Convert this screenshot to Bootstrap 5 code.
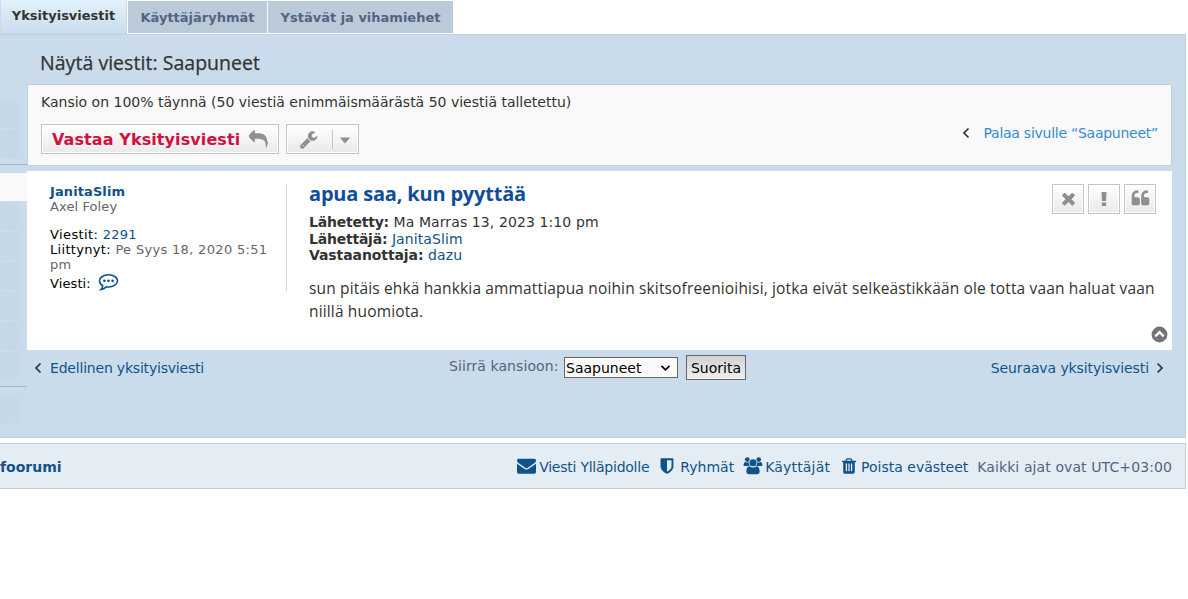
<!DOCTYPE html>
<html lang="fi">
<head>
<meta charset="utf-8">
<meta name="viewport" content="width=device-width, initial-scale=1">
<title>Näytä viestit: Saapuneet</title>
<link href="https://cdn.jsdelivr.net/npm/bootstrap@5.3.0/dist/css/bootstrap.min.css" rel="stylesheet">
<style>
body{font-family:"DejaVu Sans",Verdana,sans-serif;font-size:14px;line-height:16px;color:#333;background:#fff;overflow:hidden}
a{color:#105289;text-decoration:none}
svg{display:block;fill:currentColor;flex:none}
.page-wrap{width:1186px}
.tabs-bar{height:34px}
.tabs-bar .nav-link{padding:0;font-weight:700;font-size:13px;color:#536482;background:#bacad8;border-radius:0;height:32px;margin-top:1px;line-height:33px;text-align:center}
.tabs-bar .nav-link.active{background:linear-gradient(#e1f1fe,#cadceb);color:#333;height:34px;margin:0;width:127px;line-height:31px;border-left:1px solid #cadceb;border-right:1px solid #cadceb}
.cp-panel{height:404px;background:#cadceb;border:1px solid #bcd2e2;border-left:0}
.side-menu{width:27px;flex:none;padding-top:65px}
.side-item{height:28px;margin-bottom:2px;background:linear-gradient(90deg,#c6d8e6 45%,#cadceb 90%)}
.side-item.current{background:#f9f9f9;margin-bottom:1px}
.side-rule{height:1px;margin:6px 0 8px;background:#a4b3c1}
.cp-main{width:1145px}
h2{font-family:"Open Sans",sans-serif;font-size:19.5px;line-height:24px;font-weight:400;letter-spacing:.04px;margin:16px 0 9px 13px;-webkit-text-stroke:.25px #333}
.msg-bar{height:82px;background:#f9f9f9;border:1px solid #bcd2e2;padding:9px 13px 0}
.tool-btn{border:1px solid #c7c3bf;background:linear-gradient(#fff,#e9e9e9);box-shadow:inset 0 0 0 1px #fff;height:30px;color:#8f8f8f;border-radius:0;padding:0}
.reply-btn{width:238px;color:#d31141;font-weight:700;font-size:16px;letter-spacing:.09px;padding-left:10px;white-space:nowrap}
.reply-btn span{padding-top:2px}
.split-line{width:1px;height:19px;background:#c7c3bf}
.back-link{color:#368ad2;letter-spacing:-.26px;margin-top:-12px}
.post-box{height:179px;background:#fff;margin-top:5px;padding:13px 16px 0 23px}
.author{width:237px;height:107px;border-right:1px solid #d8d8d8;font-size:13px;line-height:15px;color:#666}
.author b{color:#000;font-weight:400}
h3{font-family:"Open Sans",sans-serif;font-size:20px;font-weight:700;letter-spacing:-.19px;line-height:24px;margin:-2px 0 8px;color:#0f4d9a}
.meta-rows{line-height:16.5px;letter-spacing:.1px}
.meta-rows b{letter-spacing:-.22px}
.post-text{font-family:"Open Sans",sans-serif;font-size:15.500px;letter-spacing:.15px;line-height:23px}
.go-select{width:114px;height:21px;border:1px solid #666;background:#fafafa;color:#000;padding:0 6px 0 1px}
.go-btn{width:60px;height:25px;border:1px solid #666;background:linear-gradient(#d2d2d2,#efefef);color:#000;padding:0}
.foot-bar{height:46px;margin-top:5px;background:#e5edf4;border:1px solid #bcd2e2;border-left:0;padding:2px 13px 0 0}
.grey{color:#536482}
</style>
</head>
<body>
<div class="page-wrap">
  <nav class="nav tabs-bar flex-nowrap">
    <a class="nav-link active" href="#">Yksityisviestit</a>
    <a class="nav-link" href="#" style="width:139px;margin-left:1px">Käyttäjäryhmät</a>
    <a class="nav-link" href="#" style="width:185px;margin-left:1px">Ystävät ja vihamiehet</a>
  </nav>
  <main class="cp-panel d-flex">
    <div class="side-menu">
      <div class="side-item"></div><div class="side-item"></div>
      <div class="side-rule"></div>
      <div class="side-item current"></div>
      <div class="side-item"></div><div class="side-item"></div><div class="side-item"></div><div class="side-item"></div><div class="side-item"></div><div class="side-item"></div>
      <div class="side-rule"></div>
      <div class="side-item"></div>
    </div>
    <div class="cp-main">
      <h2>Näytä viestit: Saapuneet</h2>
      <div class="msg-bar">
        <div>Kansio on 100% täynnä (50 viestiä enimmäismäärästä 50 viestiä talletettu)</div>
        <div class="d-flex align-items-center" style="margin-top:14px">
          <a class="btn tool-btn reply-btn d-flex align-items-center" href="#"><span>Vastaa Yksityisviesti</span>
            <svg class="ms-auto" style="color:#8f8f8f;margin-right:10px" width="19" height="19" viewBox="0 0 1792 1792"><path d="M1792 1120q0 166-127 451-3 7-10.500 24t-13.500 30-13 22q-12 17-28 17-15 0-23.500-10t-8.500-25q0-9 2.500-26.500t2.500-23.500q5-68 5-123 0-112-19.500-200.500t-54-153.500-89-112-117-78.500-148.500-50-173-25.500-198-7h-224v256q0 26-19 45t-45 19-45-19l-512-512q-19-19-19-45t19-45l512-512q19-19 45-19t45 19 19 45v256h224q713 0 875 403 53 134 53 333z"/></svg></a>
          <button class="btn tool-btn d-flex align-items-center" style="width:73px;margin-left:7px;padding-left:12px">
            <svg width="19" height="19" viewBox="0 0 1792 1792"><path d="M448 1472q0-26-19-45t-45-19-45 19-19 45 19 45 45 19 45-19 19-45zm644-420l-682 682q-37 37-90 37-52 0-91-37l-106-108q-38-36-38-90 0-53 38-91l681-681q39 98 114.500 173.500t173.500 114.500zm634-435q0 39-23 106-47 134-164.500 217.500t-258.500 83.500q-185 0-316.500-131.500t-131.500-316.500 131.500-316.500 316.500-131.500q58 0 121.500 16.500t107.500 46.500q16 11 16 28t-16 28l-293 169v224l193 107q5-3 79-48.500t135.500-81 70.500-35.500q15 0 23.500 10t8.500 25z"/></svg>
            <i class="split-line" style="margin:0 6px 0 14px"></i>
            <svg width="12" height="7" viewBox="0 0 12 7" style="margin-top:2px"><path d="M.8.5h10.400L6 6.500z"/></svg>
          </button>
          <a class="back-link ms-auto d-flex align-items-center" href="#"><svg width="8" height="12" viewBox="0 0 8 12" style="margin-right:14px"><path d="M6.500 1.500L2 6l4.500 4.500" fill="none" stroke="#333" stroke-width="1.700"/></svg>Palaa sivulle “Saapuneet”</a>
        </div>
      </div>
      <article class="post-box d-flex">
        <div class="author">
          <div><a href="#" class="fw-bold" style="letter-spacing:.1px">JanitaSlim</a></div>
          <div style="margin-bottom:13px;letter-spacing:.1px">Axel Foley</div>
          <div style="letter-spacing:.2px"><b style="letter-spacing:.4px">Viestit:</b> <a href="#">2291</a></div>
          <div class="text-nowrap" style="letter-spacing:.32px"><b>Liittynyt:</b> Pe Syys 18, 2020 5:51<br>pm</div>
          <div class="d-flex align-items-center" style="height:21px"><b style="margin-top:2px;letter-spacing:.1px">Viesti:</b><svg style="color:#105289;margin:-1px 0 0 7px" width="21" height="18" viewBox="0 0 21 18"><path d="M10.500 1.700c5 0 9 2.700 9 6.100s-4 6.200-9 6.200q-1.200 0-2.300-.2Q5.800 16 3 16.500q1.500-1.500 1.700-3.800Q1.500 10.800 1.500 7.800c0-3.400 4-6.100 9-6.100z" fill="none" stroke="currentColor" stroke-width="1.600"/><circle cx="6.400" cy="7.800" r="1.350"/><circle cx="10.500" cy="7.800" r="1.350"/><circle cx="14.600" cy="7.800" r="1.350"/></svg></div>
        </div>
        <div class="flex-grow-1 position-relative" style="margin-left:22px">
          <h3>apua saa, kun pyyttää</h3>
          <div class="meta-rows">
            <div><b>Lähetetty:</b> Ma Marras 13, 2023 1:10 pm</div>
            <div><b>Lähettäjä:</b> <a href="#">JanitaSlim</a></div>
            <div><b style="letter-spacing:-.09px">Vastaanottaja:</b> <a href="#">dazu</a></div>
          </div>
          <div class="post-text text-nowrap" style="margin-top:13px">sun pitäis ehkä hankkia ammattiapua noihin skitsofreenioihisi, jotka eivät selkeästikkään ole totta vaan haluat vaan<br>niillä huomiota.</div>
          <div class="d-flex position-absolute top-0 end-0" style="gap:4px">
            <button class="btn tool-btn d-flex align-items-center justify-content-center" style="width:32px"><svg width="19" height="19" viewBox="0 0 1792 1792" style="margin-top:-2px"><path d="M1490 1322q0 40-28 68l-136 136q-28 28-68 28t-68-28l-294-294-294 294q-28 28-68 28t-68-28l-136-136q-28-28-28-68t28-68l294-294-294-294q-28-28-28-68t28-68l136-136q28-28 68-28t68 28l294 294 294-294q28-28 68-28t68 28l136 136q28 28 28 68t-28 68l-294 294 294 294q28 28 28 68z"/></svg></button>
            <button class="btn tool-btn d-flex align-items-center justify-content-center" style="width:32px"><svg width="6" height="16" viewBox="0 0 6 16" style="margin-top:-1px"><path d="M.4 1h5.200L5 10H1zM.8 11.500h4.400v3.500H.8z"/></svg></button>
            <button class="btn tool-btn d-flex align-items-center justify-content-center" style="width:32px"><svg width="19" height="19" viewBox="0 0 1792 1792" style="margin-top:-1px"><path id="q" d="M832 960v384q0 80-56 136t-136 56h-384q-80 0-136-56t-56-136v-704q0-104 40.500-198.500t109.500-163.500 163.500-109.500 198.500-40.500h64q26 0 45 19t19 45v128q0 26-19 45t-45 19h-64q-106 0-181 75t-75 181v32q0 40 28 68t68 28h224q80 0 136 56t56 136z"/><use href="#q" x="896"/></svg></button>
          </div>
          <svg class="position-absolute" style="right:-12px;bottom:7px;color:#757575" width="17" height="17" viewBox="0 0 17 17"><circle cx="8.500" cy="8.500" r="7.900"/><path d="M4.300 10.300l4.200-4.100 4.200 4.100" fill="none" stroke="#fff" stroke-width="2.400"/></svg>
        </div>
      </article>
      <div class="d-flex position-relative" style="padding:5px 8px 0 7px">
        <a class="d-flex align-items-center" style="height:26px;letter-spacing:-.2px" href="#"><svg width="8" height="12" viewBox="0 0 8 12" style="margin-right:8px"><path d="M6.500 1.500L2 6l4.500 4.500" fill="none" stroke="#333" stroke-width="1.700"/></svg>Edellinen yksityisviesti</a>
        <div class="d-flex align-items-center position-absolute" style="left:422px;top:4px;height:26px"><span class="grey" style="margin-top:-3px;width:115px;letter-spacing:.08px">Siirrä kansioon:</span>
          <button class="go-select d-flex align-items-center justify-content-between"><span style="margin-top:1px">Saapuneet</span><svg width="11" height="8" viewBox="0 0 11 8" style="margin-top:2px"><path d="M1.500 1.800l4 4 4-4" fill="none" stroke="#000" stroke-width="1.700"/></svg></button>
          <button class="go-btn" style="margin-left:8px;padding-top:2px">Suorita</button></div>
        <a class="d-flex align-items-center ms-auto" style="height:26px;letter-spacing:-.1px" href="#">Seuraava yksityisviesti<svg width="8" height="12" viewBox="0 0 8 12" style="margin-left:7px"><path d="M1.500 1.500L6 6l-4.500 4.500" fill="none" stroke="#333" stroke-width="1.700"/></svg></a>
      </div>
    </div>
  </main>
  <footer class="foot-bar d-flex align-items-center">
    <a class="fw-bold me-auto" href="#">foorumi</a>
    <a class="d-flex align-items-center" href="#" style="letter-spacing:-.24px"><svg width="19" height="19" viewBox="0 0 1792 1792" style="margin:-3px 3px 0 0"><path d="M1792 710v794q0 66-47 113t-113 47h-1472q-66 0-113-47t-47-113v-794q44 49 101 87 362 246 497 345 57 42 92.500 65.500t94.500 48 110 24.500h2q51 0 110-24.500t94.500-48 92.500-65.500q170-123 498-345 57-39 100-87zm0-294q0 79-49 151t-122 123q-376 261-468 325-10 7-42.500 31t-54 38.500-52 32.500-57.500 27-50 9h-2q-23 0-50-9t-57.500-27-52-32.500-54-38.500-42.500-31q-91-64-262-182.500t-205-142.500q-62-42-117-115.500t-55-136.500q0-78 41.500-130t118.500-52h1472q65 0 112.500 47t47.500 113z"/></svg>Viesti Ylläpidolle</a>
    <a class="d-flex align-items-center" style="margin-left:9px" href="#"><svg width="18" height="18" viewBox="0 0 1792 1792" style="margin:-2px 4px 0 0"><path d="M1344 960v-640h-448v1137q119-63 213-137 235-184 235-360zm192-768v768q0 86-33.500 170.500t-83 150-118 127.500-126.500 103-121 77.500-89.500 49.500-42.500 20q-12 6-26 6t-26-6q-16-7-42.500-20t-89.500-49.500-121-77.500-126.500-103-118-127.500-83-150-33.500-170.500v-768q0-26 19-45t45-19h1152q26 0 45 19t19 45z"/></svg>Ryhmät</a>
    <a class="d-flex align-items-center" style="margin-left:9px;letter-spacing:.18px" href="#"><svg width="20" height="19" viewBox="0 0 21 19" style="margin:-3px 2px 0 0"><circle cx="4.500" cy="3.300" r="2.500"/><circle cx="16.500" cy="3.300" r="2.500"/><path d="M.6 9.500q0-3.800 2-3.800 1.900 1 3.600.4-.3 2.600.9 4H2q-1.400 0-1.400-.6zM20.400 9.500q0-3.800-2-3.800-1.900 1-3.600.4.300 2.600-.9 4H19q1.400 0 1.400-.6z"/><circle cx="10.500" cy="6.600" r="3.700"/><path d="M6.700 10.200q3.800 2.600 7.600 0 3.200.2 3.200 5.800 0 2.600-2.600 2.600H6.100q-2.600 0-2.600-2.600Q3.500 10.400 6.700 10.200z"/></svg>Käyttäjät</a>
    <a class="d-flex align-items-center" style="margin-left:10px" href="#"><svg width="18" height="18" viewBox="0 0 1792 1792" style="margin:-3px 3px 0 0"><path d="M704 1376v-704q0-14-9-23t-23-9h-64q-14 0-23 9t-9 23v704q0 14 9 23t23 9h64q14 0 23-9t9-23zm256 0v-704q0-14-9-23t-23-9h-64q-14 0-23 9t-9 23v704q0 14 9 23t23 9h64q14 0 23-9t9-23zm256 0v-704q0-14-9-23t-23-9h-64q-14 0-23 9t-9 23v704q0 14 9 23t23 9h64q14 0 23-9t9-23zm-544-992h448l-48-117q-7-9-17-11h-317q-10 2-17 11zm928 32v64q0 14-9 23t-23 9h-96v948q0 83-47 143.500t-113 60.500h-832q-66 0-113-58.500t-47-141.500v-952h-96q-14 0-23-9t-9-23v-64q0-14 9-23t23-9h309l70-167q15-37 54-63t79-26h320q40 0 79 26t54 63l70 167h309q14 0 23 9t9 23z"/></svg>Poista evästeet</a>
    <span class="grey" style="margin-left:9px;letter-spacing:.1px">Kaikki ajat ovat UTC+03:00</span>
  </footer>
</div>
<script src="https://cdn.jsdelivr.net/npm/bootstrap@5.3.0/dist/js/bootstrap.bundle.min.js"></script>
</body>
</html>
